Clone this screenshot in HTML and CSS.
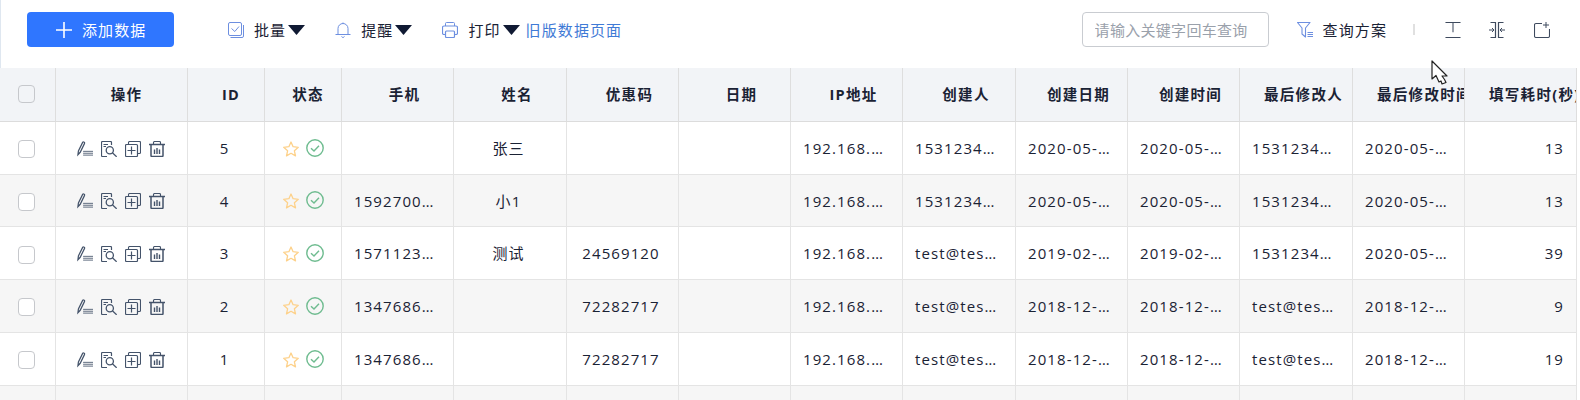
FILE: index.html
```html
<!DOCTYPE html>
<html lang="zh">
<head>
<meta charset="utf-8">
<title>数据列表</title>
<link rel="stylesheet" href="styles.css">
</head>
<body>
<svg class="defs" aria-hidden="true">
  <symbol id="i-edit" viewBox="0 0 17 16"><path d="M1 14 L1.500 10 L6 1 C6.500 .2 7.700 .6 8 1.200 C8.200 1.600 8.100 2 7.900 2.300 L3.400 11.500 Z" fill="none" stroke="currentColor" stroke-width="1.300"/><path d="M6.500 10.500H17M6.500 12.500H17M6.500 14.500H17" stroke="currentColor" stroke-width=".9"/></symbol>
  <symbol id="i-view" viewBox="0 0 16 16"><path d="M6 15.500H1.500a1 1 0 0 1-1-1V1.500a1 1 0 0 1 1-1H9.500a1 1 0 0 1 1 1V4" fill="none" stroke="currentColor" stroke-width="1.200"/><path d="M2.500 3.500H7M2.500 5.500H5" stroke="currentColor" stroke-width="1.200"/><circle cx="8.800" cy="9.200" r="3.600" fill="none" stroke="currentColor" stroke-width="1.300"/><path d="M11.400 11.800 15.600 15.800" stroke="currentColor" stroke-width="1.200"/></symbol>
  <symbol id="i-copy" viewBox="0 0 16 16"><rect x=".5" y="3.500" width="12" height="12" rx="1" fill="none" stroke="currentColor" stroke-width="1.200"/><path d="M3.500 3V1.500a1 1 0 0 1 1-1H14.500a1 1 0 0 1 1 1V11.500a1 1 0 0 1-1 1H13" fill="none" stroke="currentColor" stroke-width="1.100"/><path d="M6.500 5.500v8M2.500 9.500h8" stroke="currentColor" stroke-width="1.200"/></symbol>
  <symbol id="i-trash" viewBox="0 0 16 16"><path d="M0 3.500H16" stroke="currentColor" stroke-width="1.500"/><path d="M4.500 3V1.500a1 1 0 0 1 1-1H10.500a1 1 0 0 1 1 1V3" fill="none" stroke="currentColor" stroke-width="1.100"/><path d="M2 4V14.500a1 1 0 0 0 1 1H13a1 1 0 0 0 1-1V4" fill="none" stroke="currentColor" stroke-width="1.500"/><path d="M5.500 8.500V13M8 7V13M10.500 8.500V13" stroke="currentColor" stroke-width="1.400"/></symbol>
  <symbol id="i-star" viewBox="0 0 16 16"><path d="M8 1 10.100 5.700 15.300 6.300 11.400 9.800 12.500 14.900 8 12.300 3.500 14.900 4.600 9.800 .7 6.300 5.900 5.700Z" fill="none" stroke="currentColor" stroke-width="1.300" stroke-linejoin="round"/></symbol>
  <symbol id="i-ok" viewBox="0 0 18 18"><circle cx="9" cy="9" r="8.200" fill="none" stroke="currentColor" stroke-width="1.400"/><path d="M5 9.200 8 12 13 6.800" fill="none" stroke="currentColor" stroke-width="1.400"/></symbol>
  <symbol id="i-caret" viewBox="0 0 17 10"><path d="M0 0H17L8.500 10Z" fill="currentColor"/></symbol>
</svg>

<header class="toolbar">
  <div class="tool-group">
    <button class="add-btn" type="button">
      <svg class="plus" viewBox="0 0 16 16"><path d="M8 0V16M0 8H16" stroke="currentColor" stroke-width="1.600"/></svg>
      <span>添加数据</span>
    </button>
    <nav class="menu">
      <span class="menu-item">
        <svg class="ti" viewBox="0 0 16 16"><rect x=".5" y=".5" width="13" height="13" rx="1.500" fill="none" stroke="currentColor"/><path d="M3.500 6.500 6.800 9.500 11 4.500" fill="none" stroke="currentColor"/><path d="M2.500 15.500H14a1.500 1.500 0 0 0 1.500-1.500V3" fill="none" stroke="currentColor"/></svg>
        <span>批量</span><svg class="caret"><use href="#i-caret"/></svg>
      </span>
      <span class="menu-item">
        <svg class="ti" viewBox="0 0 16 16"><path d="M0.500 12.500H15.500M3 12.500V6.500a5 5 0 0 1 10 0V12.500M8 1.500V.5M6.500 14.500c.5 1.200 2.500 1.200 3 0" fill="none" stroke="currentColor"/></svg>
        <span>提醒</span><svg class="caret"><use href="#i-caret"/></svg>
      </span>
      <span class="menu-item">
        <svg class="ti" viewBox="0 0 16 16"><path d="M3.500 4V1.500a1 1 0 0 1 1-1H11.500a1 1 0 0 1 1 1V4" fill="none" stroke="currentColor"/><path d="M3.500 12.500H2a1.500 1.500 0 0 1-1.500-1.500V5.500A1.500 1.500 0 0 1 2 4H14a1.500 1.500 0 0 1 1.500 1.500V11a1.500 1.500 0 0 1-1.500 1.500H12.500" fill="none" stroke="currentColor" stroke-width="1.200"/><rect x="3.500" y="9" width="9" height="6.500" rx="1" fill="none" stroke="currentColor" stroke-width="1.200"/></svg>
        <span>打印</span><svg class="caret"><use href="#i-caret"/></svg>
      </span>
      <a class="old-link">旧版数据页面</a>
    </nav>
  </div>
  <div class="tool-group right">
    <input class="search" type="text" placeholder="请输入关键字回车查询">
    <span class="plan">
      <svg class="ti" viewBox="0 0 16 16"><path d="M.5 .5H13L8.500 6V15L5 12V6Z" fill="none" stroke="currentColor" stroke-width="1.100" stroke-linejoin="round"/><path d="M10.500 10.500H16M10.500 12.500H16M10.500 14.500H16" stroke="currentColor"/></svg>
      <span>查询方案</span>
    </span>
    <i class="divider"></i>
    <svg class="act a1" viewBox="0 0 16 17"><path d="M0 .5H16M8 .5V11M0 16.500H16" stroke="currentColor" stroke-width="1.100"/></svg>
    <svg class="act a2" viewBox="0 0 16 16"><path d="M1.500 .5H6.500V15.500H1.500M14.500 .5H9.500V15.500H14.500" fill="none" stroke="currentColor" stroke-width="1.200"/><path d="M0 8H5M3 6 5 8 3 10M16 8H11M13 6 11 8 13 10" fill="none" stroke="currentColor"/></svg>
    <svg class="act a3" viewBox="0 0 16 16"><path d="M8 1.500H2a1.500 1.500 0 0 0-1.500 1.500V14a1.500 1.500 0 0 0 1.500 1.500H14a1.500 1.500 0 0 0 1.500-1.500V7" fill="none" stroke="currentColor" stroke-width="1.100"/><path d="M12 0V6M9 3H15" stroke="currentColor"/></svg>
  </div>
</header>

<main class="grid">
  <div class="row head">
    <div class="c"><span class="box"></span></div>
    <div class="c">操作</div><div class="c">ID</div><div class="c">状态</div><div class="c">手机</div><div class="c">姓名</div><div class="c">优惠码</div><div class="c">日期</div><div class="c">IP地址</div><div class="c">创建人</div><div class="c">创建日期</div><div class="c">创建时间</div><div class="c">最后修改人</div><div class="c">最后修改时间</div><div class="c">填写耗时(秒)</div>
  </div>

  <div class="row">
    <div class="c"><span class="box"></span></div>
    <div class="c ops"><svg><use href="#i-edit"/></svg><svg><use href="#i-view"/></svg><svg><use href="#i-copy"/></svg><svg><use href="#i-trash"/></svg></div>
    <div class="c">5</div>
    <div class="c st"><svg class="star"><use href="#i-star"/></svg><svg class="ok"><use href="#i-ok"/></svg></div>
    <div class="c"></div><div class="c">张三</div><div class="c"></div><div class="c"></div>
    <div class="c">192.168.100.101</div><div class="c">15312345678</div><div class="c">2020-05-20</div><div class="c">2020-05-20 10:00</div><div class="c">15312345678</div><div class="c">2020-05-20 10:00</div><div class="c num">13</div>
  </div>

  <div class="row alt">
    <div class="c"><span class="box"></span></div>
    <div class="c ops"><svg><use href="#i-edit"/></svg><svg><use href="#i-view"/></svg><svg><use href="#i-copy"/></svg><svg><use href="#i-trash"/></svg></div>
    <div class="c">4</div>
    <div class="c st"><svg class="star"><use href="#i-star"/></svg><svg class="ok"><use href="#i-ok"/></svg></div>
    <div class="c">15927001234</div><div class="c">小1</div><div class="c"></div><div class="c"></div>
    <div class="c">192.168.100.101</div><div class="c">15312345678</div><div class="c">2020-05-20</div><div class="c">2020-05-20 10:00</div><div class="c">15312345678</div><div class="c">2020-05-20 10:00</div><div class="c num">13</div>
  </div>

  <div class="row">
    <div class="c"><span class="box"></span></div>
    <div class="c ops"><svg><use href="#i-edit"/></svg><svg><use href="#i-view"/></svg><svg><use href="#i-copy"/></svg><svg><use href="#i-trash"/></svg></div>
    <div class="c">3</div>
    <div class="c st"><svg class="star"><use href="#i-star"/></svg><svg class="ok"><use href="#i-ok"/></svg></div>
    <div class="c">15711231234</div><div class="c">测试</div><div class="c">24569120</div><div class="c"></div>
    <div class="c">192.168.100.101</div><div class="c">test@test.com</div><div class="c">2019-02-20</div><div class="c">2019-02-20 10:00</div><div class="c">15312345678</div><div class="c">2020-05-20 10:00</div><div class="c num">39</div>
  </div>

  <div class="row alt">
    <div class="c"><span class="box"></span></div>
    <div class="c ops"><svg><use href="#i-edit"/></svg><svg><use href="#i-view"/></svg><svg><use href="#i-copy"/></svg><svg><use href="#i-trash"/></svg></div>
    <div class="c">2</div>
    <div class="c st"><svg class="star"><use href="#i-star"/></svg><svg class="ok"><use href="#i-ok"/></svg></div>
    <div class="c">13476861234</div><div class="c"></div><div class="c">72282717</div><div class="c"></div>
    <div class="c">192.168.100.101</div><div class="c">test@test.com</div><div class="c">2018-12-20</div><div class="c">2018-12-20 10:00</div><div class="c">test@test.com</div><div class="c">2018-12-20 10:00</div><div class="c num">9</div>
  </div>

  <div class="row">
    <div class="c"><span class="box"></span></div>
    <div class="c ops"><svg><use href="#i-edit"/></svg><svg><use href="#i-view"/></svg><svg><use href="#i-copy"/></svg><svg><use href="#i-trash"/></svg></div>
    <div class="c">1</div>
    <div class="c st"><svg class="star"><use href="#i-star"/></svg><svg class="ok"><use href="#i-ok"/></svg></div>
    <div class="c">13476861234</div><div class="c"></div><div class="c">72282717</div><div class="c"></div>
    <div class="c">192.168.100.101</div><div class="c">test@test.com</div><div class="c">2018-12-20</div><div class="c">2018-12-20 10:00</div><div class="c">test@test.com</div><div class="c">2018-12-20 10:00</div><div class="c num">19</div>
  </div>

  <div class="row alt tail">
    <div class="c"></div><div class="c"></div><div class="c"></div><div class="c"></div><div class="c"></div><div class="c"></div><div class="c"></div><div class="c"></div><div class="c"></div><div class="c"></div><div class="c"></div><div class="c"></div><div class="c"></div><div class="c"></div><div class="c"></div>
  </div>
</main>

<svg class="cursor" viewBox="0 0 17 26"><path d="M1 1V19L5 15.500 8 22 10 21 11 24 15 22.500 13.500 19.500 11 16H16Z" fill="#fff" stroke="#222" stroke-width="1.200" stroke-linejoin="round"/></svg>
</body>
</html>
```

FILE: styles.css
```css
* { box-sizing: border-box; }
html, body { margin: 0; padding: 0; }
body {
  width: 1580px;
  height: 400px;
  overflow: hidden;
  position: relative;
  background: #fff;
  color: #1a2234;
  font-family: "Open Sans", "Noto Sans CJK SC", "Noto Sans", sans-serif;
  font-size: 15px;
  letter-spacing: 1.100px;
}
.defs { display: block; width: 0; height: 0; }

.toolbar {
  height: 68px;
  display: flex;
  justify-content: space-between;
  padding: 12px 27px 0 27px;
  border-left: 1px solid #dfe7f0;
  width: 1577px;
}
.tool-group { display: flex; align-items: flex-start; }
.add-btn {
  width: 147px;
  height: 35px;
  margin-left: -1px;
  background: #2f76ff;
  color: #fff;
  border: 0;
  border-radius: 4px;
  display: flex;
  align-items: center;
  padding: 0 0 0 29px;
  font: inherit;
  letter-spacing: 1.100px;
}
.plus { width: 16px; height: 16px; margin-right: 10px; }
.menu { display: flex; align-items: center; height: 35px; margin-left: 54px; }
.menu-item { display: flex; align-items: center; margin-right: 30px; }
.menu-item:nth-child(3) { margin-right: 6px; }
.ti { width: 16px; height: 16px; color: #6d8fe0; margin-right: 10px; }
.caret { width: 17px; height: 10px; margin-left: 2px; color: #101a33; }
.old-link { color: #3f7ad6; }

.right { height: 35px; align-items: center; }
.search {
  width: 187px;
  height: 35px;
  border: 1px solid #c9ccd1;
  border-radius: 4px;
  padding: 0 0 0 12px;
  font: inherit;
  letter-spacing: .3px;
  outline: 0;
}
.search::placeholder { color: #9aa1ab; opacity: 1; }
.plan { display: flex; align-items: center; margin-left: 28px; }
.divider { width: 2px; height: 11px; background: #e0e0e0; margin-left: 26px; }
.act { color: #3e4a5e; height: 16px; width: 16px; }
.a1 { margin-left: 30px; }
.a2 { margin-left: 28px; }
.a3 { margin-left: 29px; }

.grid { width: 1577px; }
.row {
  display: grid;
  grid-template-columns: 56px 132px 77px 77px 112px 113px 112px 112px 112px 113px 112px 112px 113px 112px 112px;
  height: 52.750px;
  background: #fff;
  border-bottom: 1px solid #e4e4e4;
}
.row.alt { background: #f6f6f6; }
.row.tail { height: 15px; border-bottom: 0; }
.row.head {
  height: 53.750px;
  background: #f2f4f7;
  border-bottom: 1px solid #dcdcdc;
  font-weight: 700;
  font-size: 14.500px;
  letter-spacing: 1.300px;
}
.c {
  border-right: 1px solid #e4e4e4;
  padding: 0 15px 0 12px;
  height: 100%;
  line-height: 53px;
  text-align: center;
  white-space: nowrap;
  overflow: hidden;
  text-overflow: ellipsis;
}
.c.num { text-align: right; padding-right: 12px; }
.head .c { padding: 0 10px 0 24px; line-height: 53px; text-overflow: clip; border-right-color: #dedede; }
.head .c:nth-child(2), .head .c:nth-child(3), .head .c:nth-child(4) { padding: 0 0 0 10px; }
.head .c:first-child, .row .c:first-child { padding: 0 0 0 18px; display: flex; align-items: center; }
.row .c:first-child { padding-top: 3px; }
.head .c:first-child { padding-top: 0; }
.box {
  display: block;
  width: 17px;
  height: 18px;
  border: 1px solid #c6c8cc;
  border-radius: 4px;
  background: #fff;
}
.head .box { background: #f2f4f7; }

.ops, .st { display: flex; align-items: center; padding: 2px 0 0 21px; color: #44536a; }
.ops svg { width: 16px; height: 16px; margin-right: 8px; }
.st { padding: 0 0 0 18px; }
.star { width: 16px; height: 16px; color: #fdd18a; margin-top: 2px; }
.ok { width: 18px; height: 18px; color: #6fbc90; margin-left: 7px; }

.cursor { position: absolute; left: 1431px; top: 60px; width: 17px; height: 26px; }
```
